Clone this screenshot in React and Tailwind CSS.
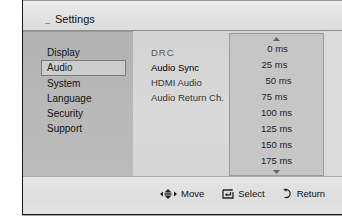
import React from "react";

const font = { fontFamily: '"Liberation Sans", Arial, sans-serif' };

function MoveIcon() {
  return (
    <svg width="18" height="10" viewBox="0 0 18 10" className="shrink-0">
      <path d="M0 5 L3 2.5 L3 7.5 Z" fill="#222" />
      <path d="M8 0 L11.5 3.5 L4.5 3.5 Z" fill="#222" />
      <rect x="4.5" y="4.3" width="7" height="1.4" fill="#222" />
      <path d="M8 10 L11.5 6.5 L4.5 6.5 Z" fill="#222" />
      <path d="M17 5 L14 2.5 L14 7.5 Z" fill="#222" />
    </svg>
  );
}

function SelectIcon() {
  return (
    <svg width="12" height="11" viewBox="0 0 12 11" className="shrink-0">
      <path d="M1 2 H10 V1" fill="none" stroke="#222" strokeWidth="1.3" />
      <path d="M1 2 V10 H11 V4" fill="none" stroke="#222" strokeWidth="1.3" />
      <path d="M8.5 4 V6.8 H4.5" fill="none" stroke="#222" strokeWidth="1.3" />
      <path d="M3 6.8 L5.2 4.8 L5.2 8.8 Z" fill="#222" />
    </svg>
  );
}

function ReturnIcon() {
  return (
    <svg width="10" height="11" viewBox="0 0 10 11" className="shrink-0">
      <path d="M3.2 1.8 A4 4 0 1 1 2.5 9.3" fill="none" stroke="#222" strokeWidth="1.2" />
      <path d="M1.2 1.2 L4.6 0.4 L4.2 3.8 Z" fill="#222" />
    </svg>
  );
}

export default function App() {
  const menu = ["Display", "Audio", "System", "Language", "Security", "Support"];
  const items = ["0 ms", "25 ms", "50 ms", "75 ms", "100 ms", "125 ms", "150 ms", "175 ms"];
  const offs = ["ml-[2px]", "ml-[-4px]", "ml-[4px]", "ml-[-4px]", "ml-[0px]", "ml-[0px]", "ml-[0px]", "ml-[0px]"];
  return (
    <div className="w-[342px] h-[223px] bg-white" style={font}>
      <div className="ml-[22px] w-[320px] h-[215px] border-l border-b border-[#1a1a1a] flex flex-col shadow-[0_1px_0_#aaa]">
        {/* header */}
        <div className="h-[31px] shrink-0 border-t border-[#9a9a9a] border-b border-b-[#8e8e8e] bg-[linear-gradient(180deg,#ececec_0%,#e2e2e2_55%,#dcdcdc_100%)] flex items-end pl-[22px] pb-[5px]">
          <span className="text-[9px] text-[#666] leading-none mr-[5px] mb-[1px]">_</span>
          <span className="text-[11px] text-[#111] leading-none">Settings</span>
        </div>
        {/* body */}
        <div className="h-[145px] shrink-0 flex">
          <div className="w-[110px] shrink-0 bg-[linear-gradient(180deg,#b2b2b2_0%,#b8b8b8_50%,#bcbcbc_100%)] border-t border-[#9a9a9a] pt-[13px] pl-[24px] pr-[7px]">
            {menu.map((m) => (
              <div
                key={m}
                className={
                  m === "Audio"
                    ? "h-[16px] -ml-[6px] pl-[5px] border border-[#7a7a7a] bg-[#cdcdcd] text-[10px] leading-[14px] text-[#222]"
                    : "h-[15px] text-[10px] leading-[15px] text-[#111]"
                }
              >
                {m}
              </div>
            ))}
          </div>
          <div className="flex-1 flex bg-[linear-gradient(180deg,#d4d4d4_0%,#d9d9d9_60%,#d6d6d6_100%)]">
            <div className="w-[96px] shrink-0 pl-[18px] pt-[14px]">
              <div className="h-[15px] text-[9.5px] leading-[15px] text-[#555] tracking-[1px]">DRC</div>
              <div className="h-[15px] text-[9.5px] leading-[15px] text-[#000]">Audio Sync</div>
              <div className="h-[15px] text-[9.5px] leading-[15px] text-[#333]">HDMI Audio</div>
              <div className="h-[15px] text-[9.5px] leading-[15px] text-[#333] whitespace-nowrap">Audio Return Ch.</div>
            </div>
            <div className="w-[95px] shrink-0 mt-[2px] h-[143px] border border-[#9c9c9c] bg-[#c6c6c6] flex flex-col items-center pt-[3px]">
              <svg width="7" height="4" viewBox="0 0 7 4">
                <path d="M3.5 0 L7 4 L0 4 Z" fill="#666" />
              </svg>
              {items.map((t, i) => (
                <div key={t} className={"h-[16px] text-[9.5px] leading-[16px] text-[#222] " + offs[i]}>
                  {t}
                </div>
              ))}
              <svg width="7" height="4" viewBox="0 0 7 4" className="mt-[1px]">
                <path d="M0 0 L7 0 L3.5 4 Z" fill="#666" />
              </svg>
            </div>
            <div className="flex-1 bg-[#dbdbdb]" />
          </div>
        </div>
        {/* footer */}
        <div className="flex-1 border-t border-[#a8a8a8] bg-[linear-gradient(180deg,#e6e6e6_0%,#dedede_50%,#e4e4e4_100%)] flex items-start pt-[11px] pl-[137px] text-[9.5px] text-[#111]">
          <div className="flex items-center gap-[3px]">
            <MoveIcon />
            <span className="leading-[11px]">Move</span>
          </div>
          <div className="flex items-center gap-[4px] ml-[18px]">
            <SelectIcon />
            <span className="leading-[11px]">Select</span>
          </div>
          <div className="flex items-center gap-[5px] ml-[17px]">
            <ReturnIcon />
            <span className="leading-[11px]">Return</span>
          </div>
        </div>
      </div>
    </div>
  );
}
